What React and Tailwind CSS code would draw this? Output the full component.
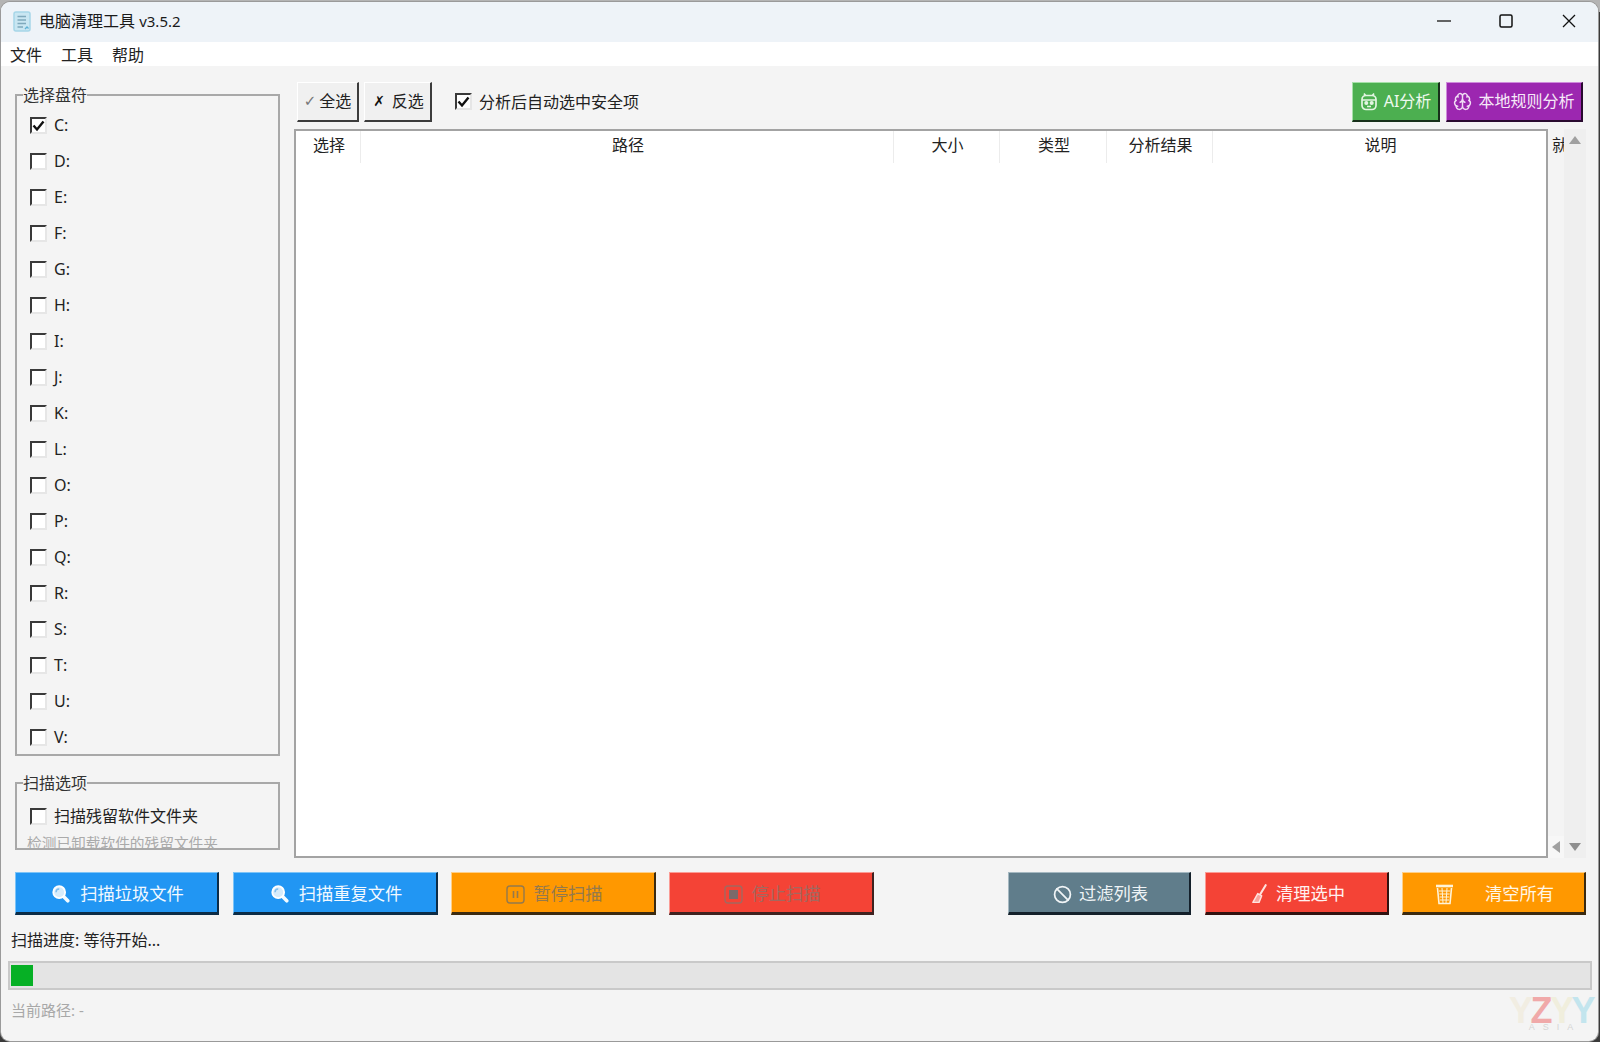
import React from "react";
import { Ban, Brain } from "lucide-react";

const FONT = "[font-family:'Noto_Sans','Noto_Sans_CJK_SC',sans-serif]";

function Check({ checked }) {
  return (
    <span className="flex h-[17px] w-[17px] shrink-0 items-center justify-center border-2 border-t-[#3a3a3a] border-l-[#3a3a3a] border-r-[#e6e6e6] border-b-[#e6e6e6] bg-white">
      {checked && (
        <svg width="13" height="13" viewBox="0 0 13 13">
          <path d="M1.5 6.5 L5 10.5 L11.5 2.5" fill="none" stroke="#111" strokeWidth="2.4" />
        </svg>
      )}
    </span>
  );
}

function DriveRow({ label }) {
  return (
    <div className="flex h-[36px] items-center gap-[7px] pl-[13px] text-[16px] text-[#222]">
      <Check checked={label === "C:"} />
      <span className="pb-[1px]">{label}</span>
    </div>
  );
}

function MainBtn({ className, widthClass, children }) {
  return (
    <div className={`flex h-[43px] items-center justify-center border-t border-l border-r-2 border-b-[3px] pt-[3px] text-[17.3px] ${widthClass} ${className}`}>
      {children}
    </div>
  );
}

function Magnifier() {
  return (
    <svg width="18" height="18" viewBox="0 0 20 20">
      <path d="M11.5 11.5 L17.5 17.5" stroke="#f3fbff" strokeWidth="4" strokeLinecap="round" />
      <circle cx="8" cy="8" r="6.6" fill="#d7ecfb" stroke="#fff" strokeWidth="2" />
      <path d="M4.5 8 A3.5 3.5 0 0 1 8 4.5" fill="none" stroke="#7fbdee" strokeWidth="1.6" />
    </svg>
  );
}

function Broom() {
  return (
    <svg width="15" height="20" viewBox="0 0 17 22" fill="none">
      <path d="M15.5 1 L9.5 11" stroke="#ffe3df" strokeWidth="2.4" strokeLinecap="round" />
      <path d="M6.5 10.5 L11 13 L8 20.5 L1 20.5 Z" fill="#f9a49c" stroke="#ffe3df" strokeWidth="1.6" strokeLinejoin="round" />
    </svg>
  );
}

function Basket() {
  return (
    <svg width="19" height="21" viewBox="0 0 19 21" fill="none" stroke="#fff3d8">
      <path d="M1 2 H18" strokeWidth="2.6" />
      <path d="M2.5 4 L4 19.5 H15 L16.5 4" strokeWidth="1.6" />
      <path d="M4 7 H15 M4.4 10 H14.6 M4.7 13 H14.3 M5 16 H14 M7 4 L8 19 M12 4 L11 19" strokeWidth="1" />
    </svg>
  );
}

function Robot() {
  return (
    <svg width="18" height="19" viewBox="0 0 18 19" fill="none" stroke="#e3f5e2" strokeWidth="1.7">
      <path d="M4 1.5 L5.5 3.5 M14 1.5 L12.5 3.5" />
      <rect x="2" y="3.5" width="14" height="14" rx="4" />
      <path d="M2 8 H16" />
      <circle cx="6.3" cy="11" r="1.2" fill="#e3f5e2" />
      <circle cx="11.7" cy="11" r="1.2" fill="#e3f5e2" />
      <path d="M7 14.5 H11" />
    </svg>
  );
}

function DocIcon() {
  return (
    <svg width="18" height="21" viewBox="0 0 18 21" fill="none">
      <rect x="1" y="1" width="16" height="19" rx="2" fill="#c9e6f2" stroke="#a6d6e8" strokeWidth="1.5" />
      <path d="M4.5 5.5 H13 M4.5 9 H13 M4.5 12.5 H13 M4.5 16 H10" stroke="#7fa9bc" strokeWidth="1.3" />
      <path d="M12 18 L14 16 L15.5 17.5" stroke="#5fb1d4" strokeWidth="1.3" />
    </svg>
  );
}

export default function App() {
  const drives = ["C:", "D:", "E:", "F:", "G:", "H:", "I:", "J:", "K:", "L:", "O:", "P:", "Q:", "R:", "S:", "T:", "U:", "V:"];
  const cols = [
    ["选择", "w-[65px]"],
    ["路径", "w-[533px]"],
    ["大小", "w-[106px]"],
    ["类型", "w-[107px]"],
    ["分析结果", "w-[106px]"],
    ["说明", "flex-1"],
  ];
  return (
    <div className={`h-[1042px] w-[1600px] overflow-hidden bg-[linear-gradient(#b4b4b4_0_12px,#3a3a3a_12px)] pt-[2px] pl-[1px] ${FONT}`}>
      <div className="relative flex h-[1039px] w-[1597px] flex-col overflow-hidden rounded-[9px] bg-[#f4f4f4] shadow-[0_0_0_1px_#9a9a9a]">
        {/* title bar */}
        <div className="flex h-[40px] items-center bg-[#eef3f8] pb-[2px]">
          <div className="ml-[12px] flex w-[26px]">
            <DocIcon />
          </div>
          <span className="text-[16px] text-[#1a1a1a]">
            电脑清理工具 <span className="text-[15px]">v3.5.2</span>
          </span>
          <div className="ml-auto flex items-center">
            <svg className="mr-[48px]" width="14" height="14" viewBox="0 0 14 14">
              <path d="M0 7 H14" stroke="#333" strokeWidth="1.3" />
            </svg>
            <svg className="mr-[49px]" width="14" height="14" viewBox="0 0 14 14" fill="none">
              <rect x="1" y="1" width="12" height="12" rx="1.5" stroke="#111" strokeWidth="1.5" />
            </svg>
            <svg className="mr-[22px]" width="14" height="14" viewBox="0 0 14 14">
              <path d="M1 1 L13 13 M13 1 L1 13" stroke="#111" strokeWidth="1.3" />
            </svg>
          </div>
        </div>
        {/* menu bar */}
        <div className="flex h-[24px] items-center gap-[19px] bg-white pt-[1px] pl-[9px] text-[16px] text-[#222]">
          <span>文件</span>
          <span>工具</span>
          <span>帮助</span>
        </div>
        {/* upper section */}
        <div className="flex h-[792px]">
          <div className="ml-[14px] flex w-[265px] shrink-0 flex-col pt-[19px]">
            <fieldset className="h-[671px] border-2 border-[#a8a8a8] pt-[2px]">
              <legend className="ml-[6px] h-[20px] text-[16px] leading-[20px] text-[#333]">选择盘符</legend>
              {drives.map((d) => (
                <DriveRow key={d} label={d} />
              ))}
            </fieldset>
            <fieldset className="mt-[17px] h-[77px] border-2 border-[#a8a8a8]">
              <legend className="ml-[6px] h-[20px] text-[16px] leading-[20px] text-[#333]">扫描选项</legend>
              <div className="mt-[8px] flex h-[30px] items-center gap-[7px] pl-[13px] text-[16px] text-[#222]">
                <Check />
                <span>扫描残留软件文件夹</span>
              </div>
              <div className="h-[17px] overflow-hidden pl-[10px] text-[14.7px] leading-[24px] text-[#aaaaaa]">检测已卸载软件的残留文件夹</div>
            </fieldset>
          </div>
          <div className="ml-[14px] flex w-[1292px] shrink-0 flex-col">
            <div className="mt-[16px] flex h-[40px] items-center pr-[3px] pl-[3px]">
              <div className="flex h-[40px] w-[62px] items-center justify-center gap-[3px] border-t border-l border-r-2 border-b-2 border-t-white border-l-white border-r-[#3c3c3c] border-b-[#3c3c3c] bg-[#f0f0f0] pb-[1px] text-[16px] text-[#222]">
                <span className="[font-family:'DejaVu_Sans'] text-[15px] text-[#777]">✓</span>
                <span>全选</span>
              </div>
              <div className="ml-[5px] flex h-[40px] w-[68px] items-center justify-center gap-[7px] border-t border-l border-r-2 border-b-2 border-t-white border-l-white border-r-[#3c3c3c] border-b-[#3c3c3c] bg-[#f0f0f0] pb-[1px] pl-[2px] text-[16px] text-[#222]">
                <span className="[font-family:'DejaVu_Sans'] text-[14px] font-bold text-[#111]">✗</span>
                <span>反选</span>
              </div>
              <div className="ml-[23px] flex items-center gap-[7px] pb-[1px] text-[16px] text-[#222]">
                <Check checked />
                <span>分析后自动选中安全项</span>
              </div>
              <div className="ml-auto flex h-[40px] w-[88px] items-center justify-center gap-[6px] border-t border-l border-r-2 border-b-2 border-t-[#a5e0a8] border-l-[#a5e0a8] border-r-[#17301a] border-b-[#17301a] bg-[#4caf50] pb-[1px] text-[16px] text-[#eef9ee]">
                <Robot />
                <span>AI分析</span>
              </div>
              <div className="ml-[6px] flex h-[40px] w-[137px] items-center justify-center gap-[6px] border-t border-l border-r-2 border-b-2 border-t-[#cf8bdc] border-l-[#cf8bdc] border-r-[#2a0b30] border-b-[#2a0b30] bg-[#9c27b0] pb-[1px] text-[16px] text-[#f6e9f8]">
                <Brain size={19} strokeWidth={1.8} color="#f0dcf4" />
                <span>本地规则分析</span>
              </div>
            </div>
            <div className="mt-[7px] flex h-[729px]">
              <div className="w-[1254px] shrink-0 border-2 border-[#a3a3a3] bg-white">
                <div className="flex h-[32px] text-[16px] text-[#222]">
                  {cols.map(([name, w]) => (
                    <div key={name} className={`flex items-center justify-center border-r border-[#ececec] pb-[4px] pl-[2px] last:border-r-0 ${w}`}>
                      {name}
                    </div>
                  ))}
                </div>
              </div>
              <div className="flex w-[16px] shrink-0 flex-col justify-between">
                <div className="mt-[5px] h-[22px] w-[16px] overflow-hidden pl-[4px] text-[16px] leading-[22px] text-[#222]">就</div>
                <div className="flex h-[22px] items-center justify-center bg-[#f7f7f7]">
                  <svg width="10" height="12" viewBox="0 0 10 12">
                    <path d="M9 0 V12 L1 6 Z" fill="#a0a0a0" />
                  </svg>
                </div>
              </div>
              <div className="flex w-[22px] shrink-0 flex-col items-center justify-between bg-[#efefef] py-[7px]">
                <svg width="12" height="8" viewBox="0 0 12 8">
                  <path d="M0 8 H12 L6 0 Z" fill="#a0a0a0" />
                </svg>
                <svg width="12" height="8" viewBox="0 0 12 8">
                  <path d="M0 0 H12 L6 8 Z" fill="#8f8f8f" />
                </svg>
              </div>
            </div>
          </div>
        </div>
        {/* action buttons */}
        <div className="mt-[14px] flex h-[43px] pr-[12px] pl-[14px]">
          <MainBtn widthClass="w-[204px] gap-[10px] pl-[3px]" className="border-t-[#7cc4f8] border-l-[#7cc4f8] border-r-[#0c2c46] border-b-[#0c2c46] bg-[#2196f3] text-[#f2f9ff]">
            <Magnifier />
            <span>扫描垃圾文件</span>
          </MainBtn>
          <MainBtn widthClass="ml-[14px] w-[205px] gap-[10px] pl-[3px]" className="border-t-[#7cc4f8] border-l-[#7cc4f8] border-r-[#0c2c46] border-b-[#0c2c46] bg-[#2196f3] text-[#f2f9ff]">
            <Magnifier />
            <span>扫描重复文件</span>
          </MainBtn>
          <MainBtn widthClass="ml-[13px] w-[205px] gap-[8px] pl-[3px]" className="border-t-[#ffcf86] border-l-[#ffcf86] border-r-[#3b2a10] border-b-[#3b2a10] bg-[#ff9800] text-[#93794d]">
            <svg width="19" height="19" viewBox="0 0 19 19" fill="none" stroke="#93794d">
              <rect x="1" y="1" width="17" height="17" rx="3" strokeWidth="1.4" />
              <path d="M7.5 6 V13 M11.5 6 V13" strokeWidth="1.6" />
            </svg>
            <span>暂停扫描</span>
          </MainBtn>
          <MainBtn widthClass="ml-[13px] w-[205px] gap-[8px] pl-[3px]" className="border-t-[#fb9c95] border-l-[#fb9c95] border-r-[#3f2220] border-b-[#3f2220] bg-[#f44336] text-[#a3685f]">
            <svg width="19" height="19" viewBox="0 0 19 19" fill="none">
              <rect x="1" y="1" width="17" height="17" rx="3" stroke="#a3685f" strokeWidth="1.4" />
              <rect x="5" y="5" width="9" height="9" fill="#7b6a6a" />
            </svg>
            <span>停止扫描</span>
          </MainBtn>
          <MainBtn widthClass="ml-auto w-[183px] gap-[7px] pl-[3px]" className="border-t-[#a5b8c1] border-l-[#a5b8c1] border-r-[#14202a] border-b-[#14202a] bg-[#607d8b] text-[#eef3f5]">
            <Ban size={19} strokeWidth={2.2} color="#f0f4f6" />
            <span>过滤列表</span>
          </MainBtn>
          <MainBtn widthClass="ml-[14px] w-[184px] gap-[9px] pl-[4px]" className="border-t-[#fb9c95] border-l-[#fb9c95] border-r-[#311210] border-b-[#311210] bg-[#f44336] text-[#fff1f0]">
            <Broom />
            <span>清理选中</span>
          </MainBtn>
          <MainBtn widthClass="ml-[13px] w-[184px] gap-[31px] pl-[2px]" className="border-t-[#ffcf86] border-l-[#ffcf86] border-r-[#3b2a10] border-b-[#3b2a10] bg-[#ff9800] text-[#fff6e6]">
            <Basket />
            <span>清空所有</span>
          </MainBtn>
        </div>
        <div className="mt-[15px] h-[20px] pl-[10px] text-[16px] leading-[20px] text-[#222]">扫描进度: 等待开始...</div>
        <div className="mt-[11px] ml-[7px] h-[29px] w-[1584px] border-2 border-[#c9c9c9] bg-[#e4e4e4] pt-[2px] pl-[1px]">
          <div className="h-[21px] w-[22px] bg-[#06b025]" />
        </div>
        <div className="mt-[10px] h-[20px] pl-[10px] text-[15px] leading-[20px] text-[#a8a8a8]">当前路径: -</div>
        {/* watermark */}
        <div className="absolute top-[998px] left-[1507px] flex w-[86px] flex-col items-center [font-family:'Liberation_Sans',sans-serif]">
          <div className="flex text-[36px] leading-[22px] font-bold tracking-[-2.5px]">
            <span className="text-[#f1ede2]">Y</span>
            <span className="text-[#f0a9a9]">Z</span>
            <span className="text-[#f0eedd]">Y</span>
            <span className="text-[#c3e5ee]">Y</span>
          </div>
          <div className="pl-[8px] text-[9px] leading-[10px] tracking-[8px] text-[#d4d4d4]">ASIA</div>
        </div>
      </div>
    </div>
  );
}
